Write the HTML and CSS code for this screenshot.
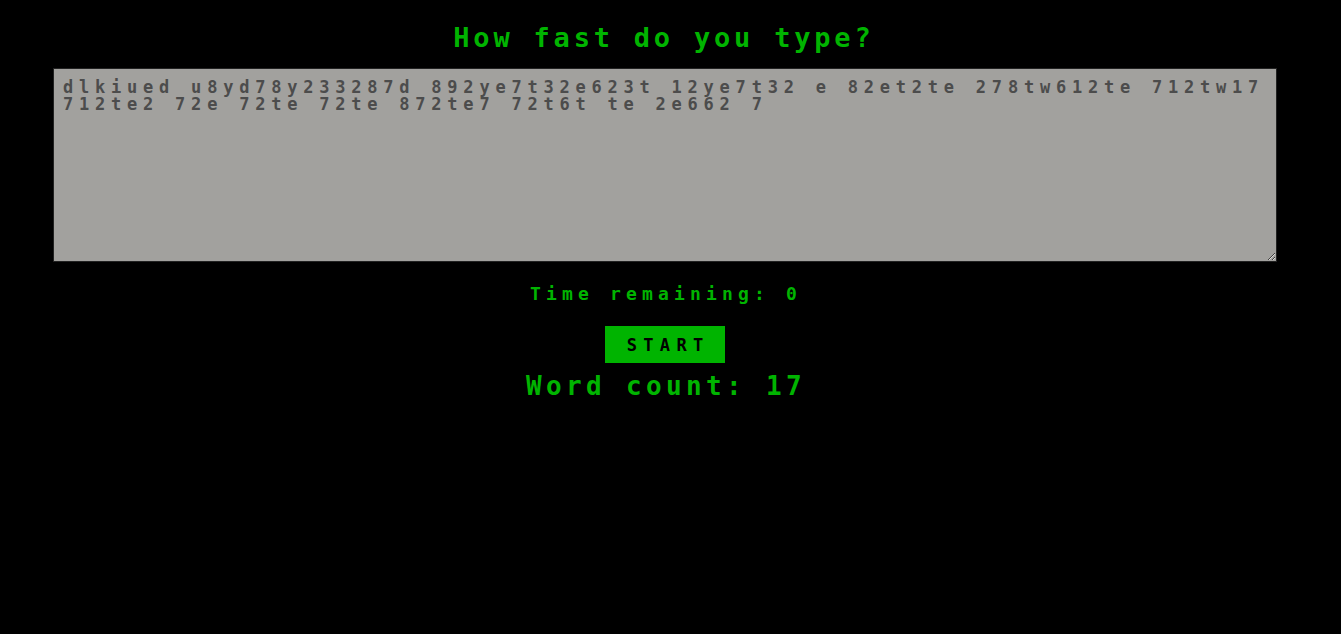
FILE: index.html
```html
<!DOCTYPE html>
<html lang="en">
<head>
<meta charset="utf-8">
<title>How fast do you type?</title>
<link rel="stylesheet" href="styles.css">
</head>
<body>
<main class="app">
  <h1 class="title">How fast do you type?</h1>
  <textarea class="typing-area" spellcheck="false">dlkiued u8yd78y233287d 892ye7t32e623t 12ye7t32 e 82et2te 278tw612te 712tw17 712te2 72e 72te 72te 872te7 72t6t te 2e662 7</textarea>
  <p class="timer">Time remaining: 0</p>
  <button class="start-btn">START</button>
  <p class="word-count">Word count: 17</p>
</main>
</body>
</html>
```

FILE: styles.css
```css
html, body {
  margin: 0;
  padding: 0;
  background: #000;
  height: 100%;
}

body {
  font-family: "DejaVu Sans Mono", "Liberation Mono", monospace;
  color: #00b400;
}

.app {
  display: flex;
  flex-direction: column;
  align-items: center;
  padding: 22px 64px 0 53px;
}

.title {
  margin: 0;
  font-size: 27px;
  font-weight: bold;
  letter-spacing: 3.8px;
  padding-left: 3.8px;
  margin-right: 6px;
  line-height: 32px;
}

.typing-area {
  box-sizing: border-box;
  width: 1224px;
  height: 194px;
  margin-top: 14px;
  padding: 10px 9px 8px;
  border: 1px solid #222;
  background: #a2a19e;
  color: #4c4c4c;
  font-family: "DejaVu Sans Mono", "Liberation Mono", monospace;
  font-weight: bold;
  font-size: 17px;
  letter-spacing: 5.78px;
  line-height: 17px;
  resize: vertical;
  outline: none;
}

.timer {
  margin: 21px 0 0;
  font-size: 18px;
  font-weight: bold;
  letter-spacing: 5.15px;
  padding-left: 2px;
  line-height: 22px;
}

.start-btn {
  margin-top: 21px;
  width: 120px;
  height: 37px;
  border: none;
  background: #00b400;
  color: #000;
  font-family: "DejaVu Sans Mono", "Liberation Mono", monospace;
  font-weight: bold;
  font-size: 17px;
  letter-spacing: 6.3px;
  padding: 0 0 0 6.3px;
  cursor: pointer;
}

.word-count {
  margin: 5px 0 0;
  font-size: 26px;
  font-weight: bold;
  letter-spacing: 4.35px;
  padding-left: 2px;
  line-height: 36px;
}
```
